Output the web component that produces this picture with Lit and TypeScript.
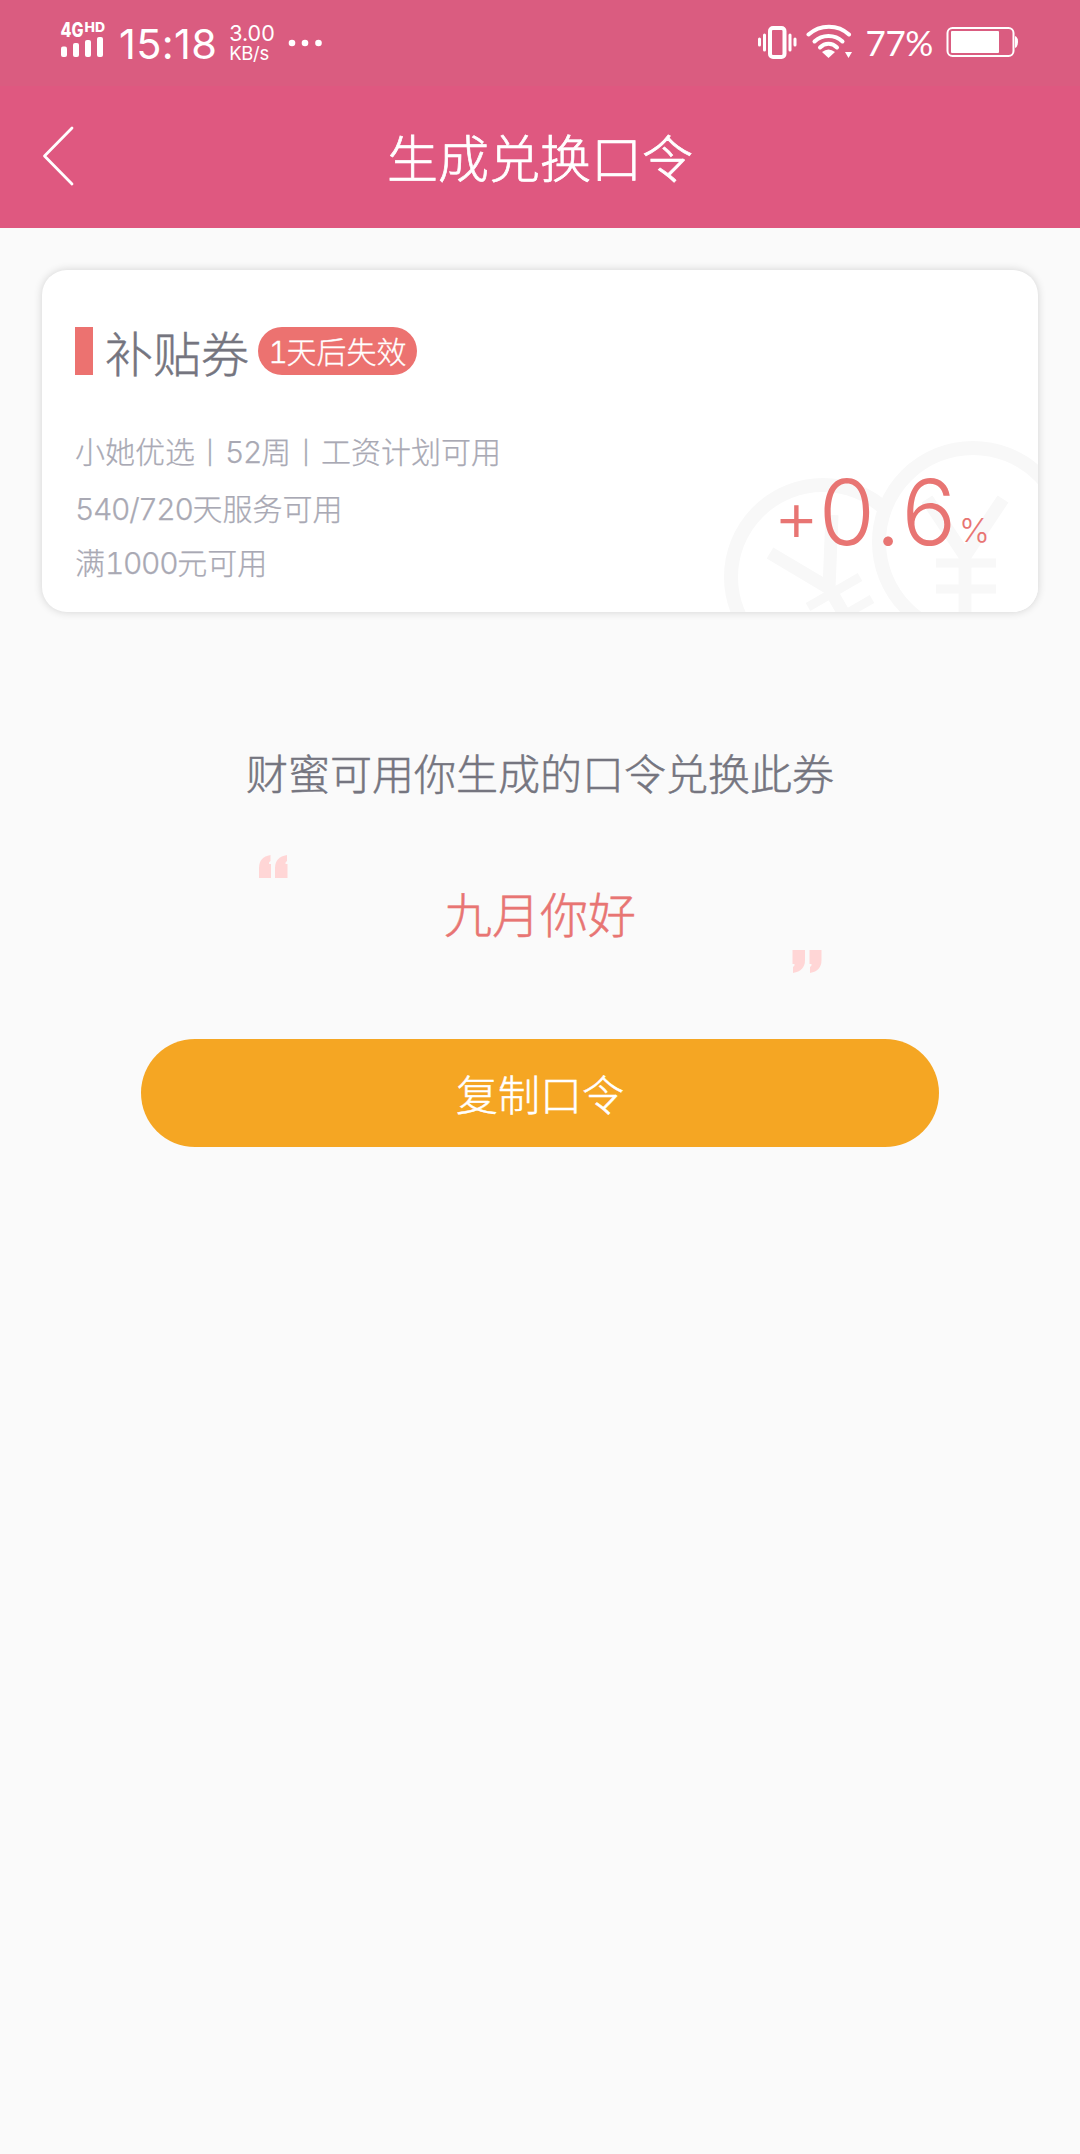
import { LitElement, html, css } from "lit";
import { customElement } from "lit/decorators.js";

const fonts = css`"Inter", "Noto Sans CJK SC", sans-serif`;

@customElement("status-bar")
class StatusBar extends LitElement {
  static styles = css`
    :host { display: flex; height: 86px; box-sizing: border-box; padding: 0 60px 0 60px; justify-content: space-between; color: #fff; background: #da5c80; }
    .side { display: flex; align-items: flex-start; }
    .signal { width: 46px; height: 48px; margin-top: 12px; }
    .net { font-weight: 800; font-size: 20px; font-family: "Inter", sans-serif; fill: #fff; }
    .hd { font-size: 13px; }
    .time { font-size: 41.5px; line-height: 48px; margin: 20px 0 0 13px; letter-spacing: 0.3px; }
    .rate { display: flex; flex-direction: column; font-size: 21.5px; line-height: 20px; margin: 23px 0 0 12px; }
    .rate .unit { font-size: 18.500px; line-height: 21px; letter-spacing: -0.3px; }
    .dots { width: 36px; height: 8px; margin: 39px 0 0 13px; }
    .vibe { width: 40px; height: 36px; margin-top: 25px; }
    .wifi { width: 48px; height: 36px; margin: 24px 0 0 8px; }
    .pct { font-size: 35px; line-height: 42px; margin: 21px 0 0 12px; letter-spacing: -0.4px; font-family: "Lato", sans-serif; }
    .batt { width: 74px; height: 32px; margin: 26px 0 0 13px; }
  `;
  render() {
    return html`
      <div class="side">
        <svg class="signal" viewBox="0 -8 46 48">
          <text class="net" x="0.500" y="16.5" textLength="23" lengthAdjust="spacingAndGlyphs">4G</text>
          <text class="net hd" x="24.500" y="11.500" textLength="20.500" lengthAdjust="spacingAndGlyphs">HD</text>
          <g fill="#fff">
            <rect x="1" y="26.500" width="6" height="10.500" rx="2" />
            <rect x="13" y="23" width="6" height="14" rx="2" />
            <rect x="25" y="20" width="6" height="17" rx="2" />
            <rect x="37" y="17" width="6" height="20" rx="2" />
          </g>
        </svg>
        <span class="time">15:18</span>
        <span class="rate"><span>3.00</span><span class="unit">KB/s</span></span>
        <svg class="dots" viewBox="0 0 36 8" fill="#fff"><circle cx="4" cy="4" r="3.3" /><circle cx="17" cy="4" r="3.3" /><circle cx="30.5" cy="4" r="3.3" /></svg>
      </div>
      <div class="side">
        <svg class="vibe" viewBox="0 0 40 36" fill="none" stroke="#fff" stroke-linecap="round">
          <rect x="12" y="3" width="14.500" height="29" rx="3" stroke-width="4" />
          <path d="M1.5 14V20M6.5 10V25M32 10V25M37 14V20" stroke-width="3" />
        </svg>
        <svg class="wifi" viewBox="0 0 48 36" fill="none" stroke="#fff" stroke-linecap="round" stroke-width="4">
          <path d="M2.5 10.500C14 0 32 0 43 10.500" />
          <path d="M8.5 17.5C16 10 29 10 36.500 17.500" />
          <path d="M14 23.500C19 18.500 26 18.500 31 23.500" />
          <path d="M16 28Q22.500 23 29 28L22.500 34Z" fill="#fff" stroke="none" />
          <path d="M39 28H46L42.500 34Z" fill="#fff" stroke="none" />
        </svg>
        <span class="pct">77%</span>
        <svg class="batt" viewBox="0 0 74 32">
          <rect x="1.500" y="2" width="66" height="28" rx="5" fill="none" stroke="#fff" stroke-width="2" />
          <rect x="5" y="5" width="48" height="22" rx="1" fill="#fff" />
          <path d="M69 10Q72 11 72 16T69 22Z" fill="#fff" />
        </svg>
      </div>
    `;
  }
}

@customElement("nav-bar")
class NavBar extends LitElement {
  static styles = css`
    :host { display: grid; grid-template-columns: 120px 1fr 120px; align-items: center; height: 142px; background: #df5880; color: #fff; }
    .back { width: 34px; height: 62px; margin: 0 0 2px 42px; }
    .title { margin: 0; padding-top: 6px; font-size: 51px; line-height: 60px; font-weight: 300; text-align: center; -webkit-text-stroke: 0.7px currentColor; }
  `;
  render() {
    return html`
      <svg class="back" viewBox="0 0 34 62" fill="none" stroke="#fff" stroke-width="2.800" stroke-linecap="round" stroke-linejoin="round"><path d="M30 3L2.500 31L30 59" /></svg>
      <h1 class="title">生成兑换口令</h1>
    `;
  }
}

@customElement("coupon-card")
class CouponCard extends LitElement {
  static styles = css`
    :host { display: flex; flex-direction: column; position: relative; box-sizing: border-box; height: 342px; border-radius: 25px; background: #fff; box-shadow: 0 0 8px rgba(0, 0, 0, 0.16); overflow: hidden; padding: 57px 48px 0 33px; }
    .coins { position: absolute; right: 0; bottom: 0; width: 320px; height: 180px; }
    .head { display: flex; align-items: center; height: 48px; }
    .bar { width: 18px; height: 48px; background: #ec7270; }
    .name { padding-top: 7px; font-size: 48px; line-height: 48px; font-weight: 300; color: #75757f; margin-left: 12px; -webkit-text-stroke: 0.5px currentColor; }
    .tag { height: 48px; line-height: 50px; border-radius: 24px; background: #ec7270; color: #fff; font-size: 30px; font-weight: 300; width: 159px; text-align: center; margin-left: 9px; white-space: nowrap; -webkit-text-stroke: 0.3px currentColor; }
    .digits { font-variant-numeric: tabular-nums; letter-spacing: -1.35px; }
    .body { display: flex; justify-content: space-between; margin-top: 49px; position: relative; }
    .rules { list-style: none; margin: 0; padding: 0; font-size: 30px; line-height: 56px; font-weight: 300; color: #a9a9b4; -webkit-text-stroke: 0.25px currentColor; }
    .rules .service { line-height: 59px; }
    .rules .minimum { line-height: 49px; }
    .value { display: flex; align-items: baseline; color: #e87573; font-weight: 300; height: 100px; margin-top: 38px; line-height: 100px; }
    .plus { font-size: 70px; transform: translate(0.5px, -4.5px); }
    .num { font-size: 91px; letter-spacing: 2.8px; }
    .unit { font-size: 33px; line-height: 1; transform: translateY(-3px); }
  `;
  render() {
    return html`
      <svg class="coins" viewBox="718 432 320 180" fill="none" stroke="#f8f8f8">
        <circle cx="823" cy="577" r="92" stroke-width="14" />
        <path d="M770 553L829 588L832 515M829 588L858 638" stroke-width="13" />
        <path d="M808 607L860 577M820 629L872 599" stroke-width="9" />
        <circle cx="973" cy="542" r="94" fill="#fff" stroke-width="14" />
        <path d="M927 499L965 556L1003 499M965 552V620" stroke-width="13" />
        <path d="M936 563H996M936 589H996" stroke-width="9" />
      </svg>
      <div class="head">
        <span class="bar"></span>
        <span class="name">补贴券</span>
        <span class="tag"><span class="digits">1</span>天后失效</span>
      </div>
      <div class="body">
        <ul class="rules">
          <li>小她优选丨<span class="digits">52</span>周丨工资计划可用</li>
          <li class="service"><span class="digits">540/720</span>天服务可用</li>
          <li class="minimum">满<span class="digits">1000</span>元可用</li>
        </ul>
        <div class="value"><span class="plus">+</span><span class="num">0.6</span><span class="unit">%</span></div>
      </div>
    `;
  }
}

@customElement("app-root")
class AppRoot extends LitElement {
  static styles = css`
    :host { display: flex; flex-direction: column; min-height: 2154px; background: #fafafa; font-family: ${fonts}; }
    .content { display: flex; flex-direction: column; align-items: center; padding: 42px 42px 0; }
    .card { align-self: stretch; }
    .hint { margin: 132px 0 0; font-size: 42px; line-height: 62px; font-weight: 300; color: #75757f; -webkit-text-stroke: 0.5px currentColor; }
    .quote { display: grid; grid-template-columns: 30px 1fr 30px; width: 564px; height: 120px; margin-top: 48px; }
    .mark { width: 30px; height: 24px; }
    .close { align-self: end; }
    .phrase { align-self: center; padding-top: 4px; text-align: center; font-size: 48px; line-height: 60px; font-weight: 300; color: #e87573; -webkit-text-stroke: 0.5px currentColor; }
    .copy { width: 798px; height: 108px; margin-top: 65px; padding: 5px 0 0; border: 0; border-radius: 54px; background: #f5a623; color: #fff; font: 300 42px/103px ${fonts}; -webkit-text-stroke: 0.5px currentColor; }
  `;
  render() {
    return html`
      <status-bar></status-bar>
      <nav-bar></nav-bar>
      <div class="content">
        <coupon-card class="card"></coupon-card>
        <p class="hint">财蜜可用你生成的口令兑换此券</p>
        <div class="quote">
          <svg class="mark" viewBox="0 0 30 24" fill="#ffd6d6"><path d="M1 24V14Q1 3 12.500 1V7Q10.500 8 11 10H13V24ZM17 24V14Q17 3 29 1V7Q27 8 27.500 10H29.500V24Z" /></svg>
          <span class="phrase">九月你好</span>
          <svg class="mark close" viewBox="0 0 30 24" fill="#ffd6d6"><path d="M29.500 0V10Q29.500 21 18 23V17Q20 16 19.500 14H17.500V0ZM13 0V10Q13 21 1 23V17Q3 16 2.500 14H.5V0Z" /></svg>
        </div>
        <button class="copy">复制口令</button>
      </div>
    `;
  }
}
